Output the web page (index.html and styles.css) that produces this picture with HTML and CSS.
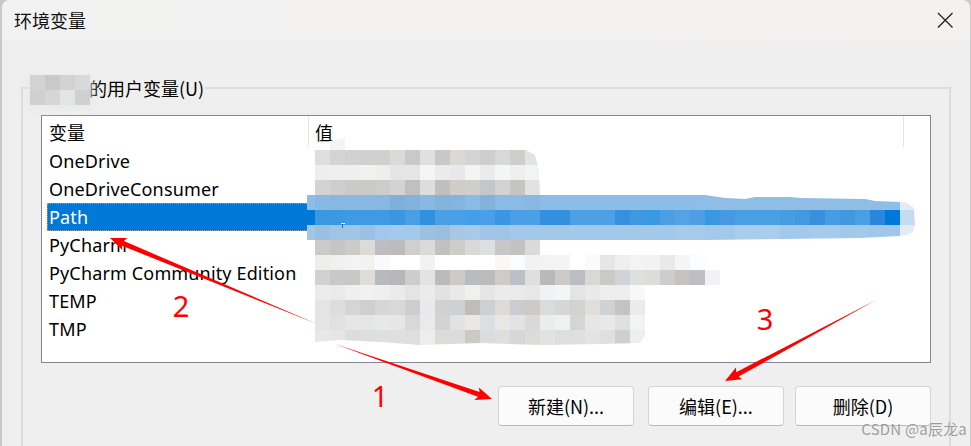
FILE: index.html
```html
<!DOCTYPE html>
<html lang="zh-CN">
<head>
    <meta charset="UTF-8">
    <title>环境变量</title>
    <link rel="stylesheet" href="styles.css">
</head>
<body>

    <div class="dialog">
        <div class="titlebar">
            <span class="title">环境变量</span>
            <button class="close" aria-label="关闭">
                <svg width="16" height="16" viewBox="0 0 16 16"><path d="M1 1L15.5 15.5M15.5 1L1 15.5" stroke="#222" stroke-width="1.3" fill="none"/></svg>
            </button>
        </div>

        <div class="content">
            <fieldset class="group">
                <legend class="group-title">
                    <span class="name-mosaic">
                        <i class="c1"></i><i class="c2"></i><i class="c3"></i><i class="c4"></i>
                        <i class="c5"></i><i class="c6"></i><i class="c7"></i><i class="c5"></i>
                    </span>
                    的用户变量(U)
                </legend>

                <div class="listbox">
                    <div class="list-head">
                        <div class="col-name">变量</div>
                        <div class="col-value">值</div>
                    </div>
                    <div class="row">OneDrive</div>
                    <div class="row">OneDriveConsumer</div>
                    <div class="row selected">Path</div>
                    <div class="row">PyCharm</div>
                    <div class="row">PyCharm Community Edition</div>
                    <div class="row">TEMP</div>
                    <div class="row">TMP</div>
                </div>

                <div class="button-row">
                    <button class="btn btn-new">新建(N)...</button>
                    <button class="btn">编辑(E)...</button>
                    <button class="btn">删除(D)</button>
                </div>
            </fieldset>
        </div>
    </div>

    <!-- 打码和红色标注 -->
    <svg class="overlay" width="971" height="446" viewBox="0 0 971 446">
        <defs>
            <clipPath id="blurShape">
                <polygon points="315,150 323,146 330,141 345,138 345,150 526,150 535,155 539,170 540,195 705,195 725,198 745,199 755,197 790,197 800,198 865,199 875,201 900,202 907,203 914,208 915,225 913,232 907,235 900,236 860,238 705,240 540,240 540,255 705,255 716,260 720,270 720,285 645,285 645,335 640,343 600,344 540,345 480,343 420,345 380,342 340,340 315,342 315,240 307,240 307,195 315,195"/>
            </clipPath>
        </defs>
        <g id="mosaic" clip-path="url(#blurShape)"></g>
        <rect x="341" y="223" width="4" height="1" fill="#fff"/>
        <rect x="342" y="224" width="1" height="4" fill="#0078d7"/>

        <g fill="#ff0000">
            <polygon points="335,344 479.6,392 478.9,387.5 492,399 474.5,400 478,396.8"/>
            <polygon points="317,324 123.9,241.1 127.3,238 110,238 122.3,250 121.9,245.7"/>
            <polygon points="876,300 736.2,372.2 736,367.6 725,381 742.2,379.2 738.6,376.6"/>
        </g>
        <g class="mark">
            <text x="380" y="407">1</text>
            <text x="181" y="317">2</text>
            <text x="765" y="330">3</text>
        </g>
    </svg>

    <div class="watermark">CSDN @a辰龙a</div>

    <script src="mosaic.js"></script>

</body>
</html>
```

FILE: styles.css
```css
* {
    box-sizing: border-box;
}
body {
    margin: 0;
    height: 446px;
    overflow: hidden;
    position: relative;
    background-color: #c9c9c9;
    font-family: "Segoe UI", "Noto Sans", "Noto Sans CJK SC", sans-serif;
    font-size: 18px;
    letter-spacing: 0.15px;
    color: #000;
}
.dialog {
    margin: 0 1px 0 2px;
    height: 446px;
    border-radius: 8px 8px 0 0;
    background-color: #efefef;
    overflow: hidden;
}
.titlebar {
    height: 40px;
    padding: 0 17px 0 12px;
    display: flex;
    align-items: center;
    justify-content: space-between;
    background: linear-gradient(90deg, #f2f2f2, #f5f1ef);
}
.title {
    font-size: 18px;
    font-family: "Noto Sans CJK SC", sans-serif;
    letter-spacing: 0;
    color: #111;
}
.close {
    padding: 0;
    border: 0;
    background: none;
    display: flex;
}
.content {
    padding: 36px 19px 0;
}
.group {
    margin: 0;
    padding: 0 18px;
    height: 412px;
    min-width: 0;
    border: 2px solid #dcdcdc;
    border-bottom: 0;
}
.group-title {
    position: relative;
    margin-left: -11px;
    padding: 0 1px 0 59px;
    height: 24px;
    line-height: 24px;
    font-size: 18px;
    font-family: "Noto Sans CJK SC", sans-serif;
    letter-spacing: 0;
    white-space: nowrap;
}
.name-mosaic {
    position: absolute;
    left: 0;
    top: -1px;
    display: grid;
    grid-template-columns: repeat(4, 15px);
    grid-auto-rows: 15px;
    box-shadow: 0 3px 8px 2px rgba(233, 233, 233, 0.9);
}
.name-mosaic i {
    display: block;
}
.c1 { background-color: #d3d3d3; }
.c2 { background-color: #c9c9c9; }
.c3 { background-color: #d2d2d2; }
.c4 { background-color: #d9d9d9; }
.c5 { background-color: #d0d0d0; }
.c6 { background-color: #d6d6d6; }
.c7 { background-color: #e3e5e4; }

.listbox {
    margin-top: 15px;
    height: 248px;
    background-color: #fff;
    border: 1px solid #85858f;
}
.list-head {
    height: 31px;
    display: flex;
    line-height: 33px;
    font-family: "Noto Sans CJK SC", sans-serif;
    font-size: 18px;
    letter-spacing: 0;
}
.col-name {
    width: 267px;
    padding-left: 7px;
    border-right: 1px solid #e5e5e5;
}
.col-value {
    width: 595px;
    padding-left: 6px;
    border-right: 1px solid #e5e5e5;
}
.row {
    margin-left: 5px;
    width: 260px;
    height: 28px;
    line-height: 26px;
    padding-left: 2px;
    border: 1px solid transparent;
    border-right: 0;
    padding-left: 1px;
    white-space: nowrap;
}
.row.selected {
    color: #fff;
    background-color: #0078d7;
    border-color: #d9975a;
    border-style: dotted;
}
.button-row {
    margin-top: 23px;
    display: flex;
    justify-content: flex-end;
    gap: 11px;
}
.btn {
    width: 136px;
    height: 40px;
    padding: 0;
    background-color: #fbfbfb;
    border: 1px solid #d4d4d4;
    border-bottom-color: #b8b8b8;
    border-radius: 4px;
    font-family: "Noto Sans CJK SC", sans-serif;
    font-size: 18px;
    letter-spacing: 0;
    color: #000;
}
.btn-new {
    margin-right: 3px;
}
.overlay {
    position: absolute;
    left: 0;
    top: 0;
}
.mark text {
    fill: #ff0000;
    font-family: "Noto Sans", sans-serif;
    font-size: 29px;
    text-anchor: middle;
}
.watermark {
    position: absolute;
    right: 4px;
    bottom: 8px;
    font-family: "Noto Sans CJK SC", sans-serif;
    font-size: 15px;
    letter-spacing: 0.2px;
    line-height: 18px;
    color: #9b9b9b;
    text-shadow: 0 0 1px #fff;
}
```

FILE: mosaic.js
```js
// Each row is 15px tall and its cells are 15px wide
var rows = [
    [315, 135, "fff f3f4f5"],
    [315, 150, "dfdddd d4d4d4 d2d1cf cfd1d0 d0d0d0 dcdad8 c9c9c9 dee0e1 c9c8c8 dcd8d5 d3d5d4 cdced0 d7d9d8 cfcecc e3e3e5"],
    [315, 165, "eeeeee efefef efefee f0f1f0 efeeed e4e5e7 e6e6e6 f4f5f5 ecebea e8e8ea f4f4f3 ebebeb f4f5f5 f0efee f2f3f5"],
    [315, 180, "d4d3d3 cecece cbcac8 c9cbc9 cccccb d3d3d3 c1c0be dcdddf c1bfbd cfcdca cfcecd c5c6ca d2d2d2 c6c4c1 dfe1e3"],
    [315, 195, "88b9e2 86b8e1 87b9e2 87b9e2 86b8e1 7eb0da 82b3de 88b9e2 83b4dd 84b5de 88bbe5 82b3dc 8abbe5 8abbe5 88b9e3 8cbde6 8cbde6 8cbde6 8cbde6 8cbde6 8cbde6 8cbde6 8cbde6 8cbde6 8cbde6 8ebee6 8ebee6 8ebee6 8ebee6 8ebee6 8ebee6 8ebee6 8ebee6 8ebee6 8ebee6 8ebee6 8ebee6 8ebee6 8ebee6 e1ecf6"],
    [315, 210, "3b97e0 3c98e2 3f9ae3 409ae3 3f99e3 3a96e1 4a9fe4 3190e0 4a9fe5 4aa0e6 43a0e8 4a9fe8 3a96e2 4b9ee5 4aa0e5 3390e0 3390e0 4ea0e4 4ea0e4 4ea0e4 3590e0 4098e2 3b98e2 4d9ee2 55a3e4 4d9ee2 3a98e2 4799e2 4a9ee4 4a9ee4 4a9ee3 489de2 4398e0 3890dd 479de4 4098e0 4a9ee4 2a85dc 0078d7 c5dbef"],
    [315, 225, "9bbfe1 a0c3e6 a1c4e7 9bc0e3 a2c7ea a3c9ed a3c9ec 9bc0e1 9abede a9c7e4 a7c9ea a2c5e7 a0c4e7 a4c8eb a3c9ea a3c9ea a3c9ea a3c9ea a3c9ea a3c9ea a3c9ea a3c9ea a3c9ea a3c9ea a6caea a6caea a3c9ea a3c9ea aacdec aacdec aacdec a3c9ea a3c9ea a7caea a7caea a3c9ea a3c9ea a0c6e8 a0c6e8 e1ecf6"],
    [315, 240, "cccbca c5c5c5 cccbca dedad5 bdbdc2 bcbcbe d0cfcf dadada c2c1c1 cecdca d9d9d9 dedfe0 c8c7c7 c2c2c1 dadada"],
    [315, 255, "eeeeee f0f0ef f2f4f3 f3f2f0 f8fafb ffffff ffffff f2f2f2 ffffff ffffff ffffff ffffff f9f8f6 fbfcfd f2f2f3 f3f3f3 f4f4f4 ffffff fafafa e6e6e5 eef0ef f3f3f3 f2f2f2 e9e9e9 f5f5f3 fbfcfd"],
    [315, 270, "d2d1d0 c8c8c8 c8c8c7 e0dcd8 b8b9bd b6b7b8 cdcdcd e3e3e3 bbbbbb cdcac7 b9bcbf bdbcba cfcbc7 bcc0c6 dfdfdd b9b9b9 cdcac7 bcbcc3 d8d8d8 cac9c6 d2d3d8 dfdfdf dddcdb cdcdce c4c3c2 bebfc1 f2f2f4"],
    [315, 285, "ececec eaeaea efefef f1f1f1 efefef edebe9 e4e4e4 ebebeb e2e2e2 e9e9e9 f0f0ed e6e6e6 ebebeb eaeaea e8e7e5 f1f2f4 f5f5f5 e3e5e4 e9e9e8 eeeeec ededed f7f8f8"],
    [315, 300, "e4e4e4 dddddd d5d5d3 cfcfcf d7d6d4 d7d8da cecece e7e9eb d2d1cf cfd0d3 c0bcb7 ccd0d5 dcdbd6 caccd1 cecbc7 dbdbdb d4d6d9 d2d3d0 dfdedb ced2d5 c3c3c3 eaecec"],
    [315, 315, "e4e4e4 e1e1e1 e6e6e6 e6e6e6 e7e8e8 e5e6e6 d8d8d8 e9ebea d3d3d3 e2e2e2 eae8e6 dcdfe2 e9e7e5 e1e3e5 dad9d7 ebecee eff1f0 d5d5d5 e6e6e5 e7e8e7 e0e0e0 f2f4f4"],
    [315, 330, "e8e8e8 e6e6e6 dddddd dedede dfdfdf dfdfdf dedede ecedef dddbd9 d9dcdf cdc9c5 d9dde0 dededc d7d7d7 dcdbd8 e2e2e2 dcdee1 dedfe1 e4e3e1 dddfe1 cfcfcf eeeeee"]
];

var group = document.getElementById("mosaic");

function addCell(x, y, width, color) {
    var rect = document.createElementNS("http://www.w3.org/2000/svg", "rect");
    rect.setAttribute("x", x);
    rect.setAttribute("y", y);
    rect.setAttribute("width", width);
    rect.setAttribute("height", 15);
    rect.setAttribute("fill", "#" + color);
    group.appendChild(rect);
}

// the blue band starts a little before the grid
addCell(307, 195, 8, "8cbde5");
addCell(307, 210, 8, "0078d7");
addCell(307, 225, 8, "a0c6e8");

rows.forEach(function (row) {
    row[2].split(" ").forEach(function (color, i) {
        addCell(row[0] + i * 15, row[1], 15, color);
    });
});
```
